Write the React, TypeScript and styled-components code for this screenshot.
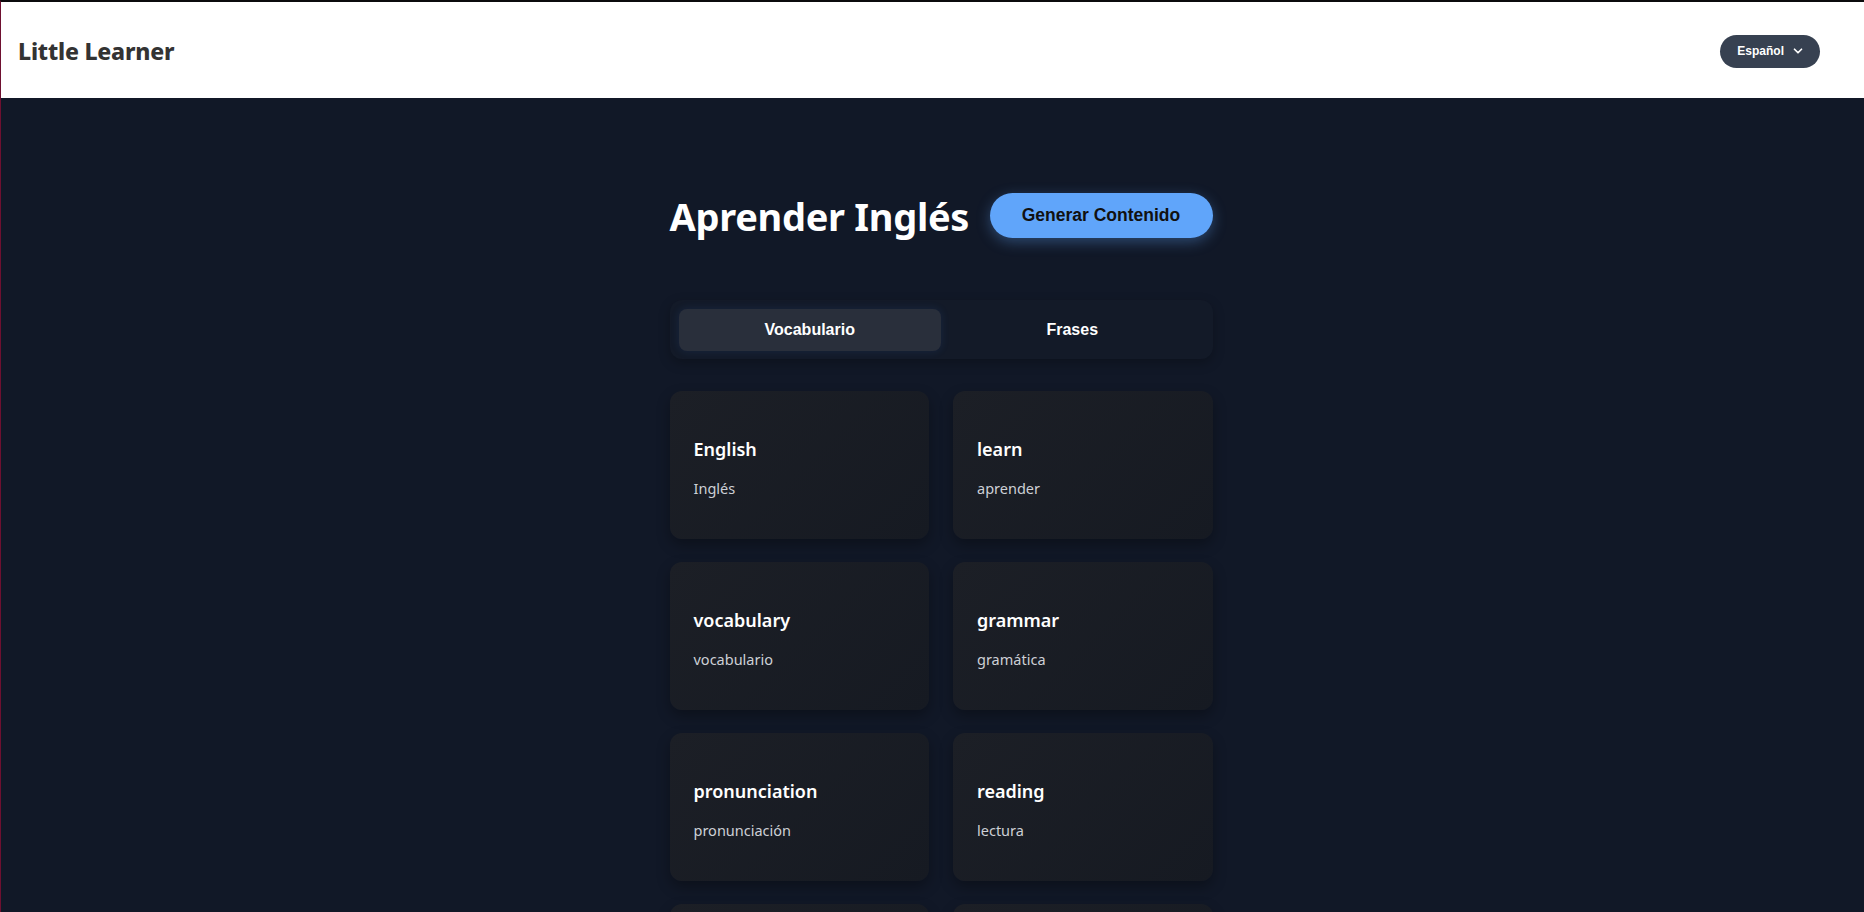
import React from "react";
import styled, { createGlobalStyle } from "styled-components";

const GlobalStyle = createGlobalStyle`
  html, body {
    margin: 0;
    padding: 0;
    background: #111827;
  }
  body {
    font-family: "Noto Sans", "Open Sans", sans-serif;
  }
  * { box-sizing: border-box; }
`;

const Page = styled.div`
  min-height: 100vh;
  background: #111827;
  border-top: 2px solid #0b0b0d;
  border-left: 1px solid #6e1030;
`;

const Header = styled.header`
  height: 96px;
  background: #ffffff;
  display: flex;
  align-items: center;
  justify-content: space-between;
  padding: 2px 44px 0 17px;
`;

const Logo = styled.h1`
  margin: 0;
  font-family: "Noto Sans", sans-serif;
  font-size: 23px;
  font-weight: 800;
  color: #333333;
  letter-spacing: -0.2px;
`;

const LangButton = styled.button`
  display: flex;
  align-items: center;
  gap: 8px;
  height: 33px;
  padding: 0 16px 0 17px;
  border: none;
  border-radius: 999px;
  background: #374151;
  color: #ffffff;
  font-family: "Liberation Sans", Arial, sans-serif;
  font-size: 12px;
  font-weight: 700;
  cursor: pointer;
`;

const Main = styled.main`
  display: flex;
  justify-content: center;
  padding: 95px 0 40px 17px;
`;

const Column = styled.div`
  width: 543px;
  display: flex;
  flex-direction: column;
`;

const TitleRow = styled.div`
  display: flex;
  align-items: center;
  justify-content: space-between;
  height: 45px;
`;

const Title = styled.h2`
  margin: 0;
  font-family: "Noto Sans", sans-serif;
  font-size: 38px;
  font-weight: 700;
  color: #ffffff;
  letter-spacing: -0.3px;
`;

const GenerateButton = styled.button`
  height: 45px;
  width: 223px;
  border: none;
  border-radius: 999px;
  background: #60a5fa;
  color: #111111;
  font-family: "Liberation Sans", Arial, sans-serif;
  font-size: 17.5px;
  font-weight: 700;
  box-shadow: 0 4px 14px rgba(96, 165, 250, 0.35);
  cursor: pointer;
`;

const Tabs = styled.div`
  margin-top: 62px;
  display: grid;
  grid-template-columns: 1fr 1fr;
  padding: 9px 9px 8px;
  height: 59px;
  border-radius: 12px;
  background: #131a28;
  box-shadow: 0 4px 12px rgba(0, 0, 0, 0.25);
`;

const Tab = styled.button<{ $active?: boolean }>`
  border: none;
  border-radius: 8px;
  background: ${(p) => (p.$active ? "#292f3b" : "transparent")};
  box-shadow: ${(p) => (p.$active ? "0 0 10px rgba(59, 130, 246, 0.12)" : "none")};
  color: #ffffff;
  font-family: "Liberation Sans", Arial, sans-serif;
  font-size: 16px;
  font-weight: 700;
  cursor: pointer;
`;

const Grid = styled.div`
  margin-top: 32px;
  display: grid;
  grid-template-columns: 1fr 1fr;
  gap: 23px 24px;
`;

const Card = styled.div`
  height: 148px;
  border-radius: 12px;
  background: linear-gradient(135deg, #1c1f26 0%, #161a22 100%);
  box-shadow: 0 6px 14px rgba(0, 0, 0, 0.3);
  padding: 44px 24px 40px;
  display: flex;
  flex-direction: column;
  justify-content: center;
`;

const Word = styled.div`
  font-family: "Noto Sans", sans-serif;
  font-size: 18px;
  font-weight: 600;
  line-height: 27px;
  color: #ffffff;
  margin-bottom: 14px;
`;

const Translation = styled.div`
  font-family: "Noto Sans", sans-serif;
  font-size: 14.5px;
  line-height: 22px;
  color: #cdd0d6;
`;

const Chevron = () => (
  <svg width="12" height="12" viewBox="0 0 24 24" fill="none" stroke="currentColor" strokeWidth="3.4" strokeLinecap="round" strokeLinejoin="round">
    <polyline points="5 8.5 12 15.5 19 8.5" />
  </svg>
);

const words = [
  ["English", "Inglés"],
  ["learn", "aprender"],
  ["vocabulary", "vocabulario"],
  ["grammar", "gramática"],
  ["pronunciation", "pronunciación"],
  ["reading", "lectura"],
  ["writing", "escritura"],
  ["listening", "escuchar"],
];

export default function App() {
  return (
    <>
      <GlobalStyle />
      <Page>
        <Header>
          <Logo>Little Learner</Logo>
          <LangButton>
            Español <Chevron />
          </LangButton>
        </Header>
        <Main>
          <Column>
            <TitleRow>
              <Title>Aprender Inglés</Title>
              <GenerateButton>Generar Contenido</GenerateButton>
            </TitleRow>
            <Tabs>
              <Tab $active>Vocabulario</Tab>
              <Tab>Frases</Tab>
            </Tabs>
            <Grid>
              {words.map(([w, t]) => (
                <Card key={w}>
                  <Word>{w}</Word>
                  <Translation>{t}</Translation>
                </Card>
              ))}
            </Grid>
          </Column>
        </Main>
      </Page>
    </>
  );
}
